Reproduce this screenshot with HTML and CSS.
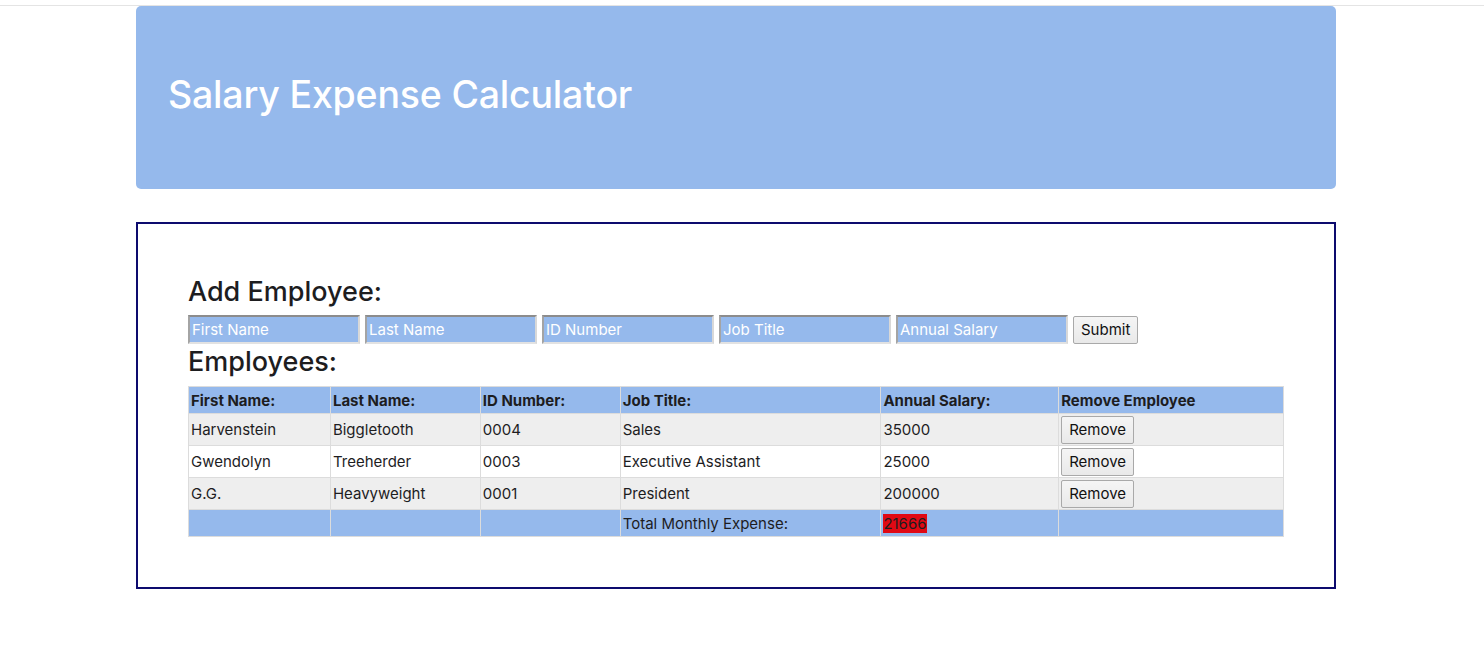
FILE: index.html
```html
<!DOCTYPE html>
<html>
<head>
<meta charset="utf-8">
<link rel="stylesheet" href="styles.css">
</head>
<body>
<div class="topline"></div>
<header class="jumbotron">
  <h1 class="title">Salary Expense Calculator</h1>
</header>
<main class="panel">
  <h2 class="section-title">Add Employee:</h2>
  <form class="add-form">
    <input class="field" type="text" placeholder="First Name">
    <input class="field" type="text" placeholder="Last Name">
    <input class="field" type="text" placeholder="ID Number">
    <input class="field" type="text" placeholder="Job Title">
    <input class="field" type="text" placeholder="Annual Salary">
    <button class="btn" type="button">Submit</button>
  </form>
  <h2 class="section-title employees">Employees:</h2>
  <table class="emp-table">
    <colgroup>
      <col class="c1"><col class="c2"><col class="c3"><col class="c4"><col class="c5"><col class="c6">
    </colgroup>
    <thead>
      <tr><th>First Name:</th><th>Last Name:</th><th>ID Number:</th><th>Job Title:</th><th>Annual Salary:</th><th>Remove Employee</th></tr>
    </thead>
    <tbody>
      <tr><td>Harvenstein</td><td>Biggletooth</td><td>0004</td><td>Sales</td><td>35000</td><td><button class="btn" type="button">Remove</button></td></tr>
      <tr><td>Gwendolyn</td><td>Treeherder</td><td>0003</td><td>Executive Assistant</td><td>25000</td><td><button class="btn" type="button">Remove</button></td></tr>
      <tr><td>G.G.</td><td>Heavyweight</td><td>0001</td><td>President</td><td>200000</td><td><button class="btn" type="button">Remove</button></td></tr>
    </tbody>
    <tfoot>
      <tr><td></td><td></td><td></td><td>Total Monthly Expense:</td><td><span class="total">21666</span></td><td></td></tr>
    </tfoot>
  </table>
</main>
</body>
</html>
```
FILE: styles.css
```css
body {
  margin: 0;
  font-family: Inter, "Liberation Sans", sans-serif;
  color: #212529;
  background: #fff;
}
.topline {
  height: 5px;
  border-bottom: 1px solid #e4e4e4;
}
.jumbotron {
  box-sizing: border-box;
  margin-left: 136px;
  width: 1200px;
  height: 183px;
  background: #95b9ec;
  border-radius: 5px;
  padding: 0 0 6px 32px;
  display: flex;
  align-items: center;
}
.title {
  margin: 0;
  color: #fff;
  font-size: 37.5px;
  font-weight: 500;
  letter-spacing: -0.2px;
}
.panel {
  box-sizing: border-box;
  margin: 33px 0 0 136px;
  width: 1200px;
  height: 367px;
  border: 2px solid #0d0b6e;
  padding: 51px 50px 0 50px;
}
.section-title {
  margin: 0;
  font-size: 27px;
  font-weight: 500;
  line-height: 34px;
  color: #1d1d1f;
}
.add-form {
  display: flex;
  align-items: center;
  gap: 5px;
  margin-top: 6px;
}
.field {
  box-sizing: border-box;
  width: 172px;
  height: 29px;
  background: #95b9ec;
  border-style: solid;
  border-width: 2px;
  border-color: #8c8c8c #d8d8d8 #e2e2e2 #a4a4a4;
  padding: 1px 2px;
  font-family: inherit;
  font-size: 15px;
  color: #fff;
}
.field::placeholder {
  color: #fff;
}
.btn {
  box-sizing: border-box;
  height: 28px;
  padding: 0 7px;
  font-family: inherit;
  font-size: 15px;
  color: #111;
  background: linear-gradient(#f5f5f5, #e9e9e9);
  border: 1px solid #a9a9a9;
  border-radius: 2px;
}
.employees {
  margin-top: 1px;
}
.emp-table {
  margin-top: 7px;
  border-collapse: collapse;
  width: 1096px;
  font-size: 15px;
  color: #1d1d1f;
}
.c1 { width: 142px; }
.c2 { width: 150px; }
.c3 { width: 140px; }
.c4 { width: 261px; }
.c5 { width: 178px; }
.c6 { width: 225px; }
.emp-table th,
.emp-table td {
  border: 1px solid #dcdcdc;
  padding: 0 2px;
  text-align: left;
}
.emp-table th {
  background: #95b9ec;
  font-weight: 700;
  height: 26px;
}
.emp-table tbody td {
  height: 31px;
}
.emp-table tbody tr:nth-child(odd) td {
  background: #eeeeee;
}
.emp-table tbody tr:nth-child(even) td {
  background: #fff;
}
.emp-table tfoot td {
  background: #95b9ec;
  height: 26px;
}
.total {
  background: #e00914;
}
```
